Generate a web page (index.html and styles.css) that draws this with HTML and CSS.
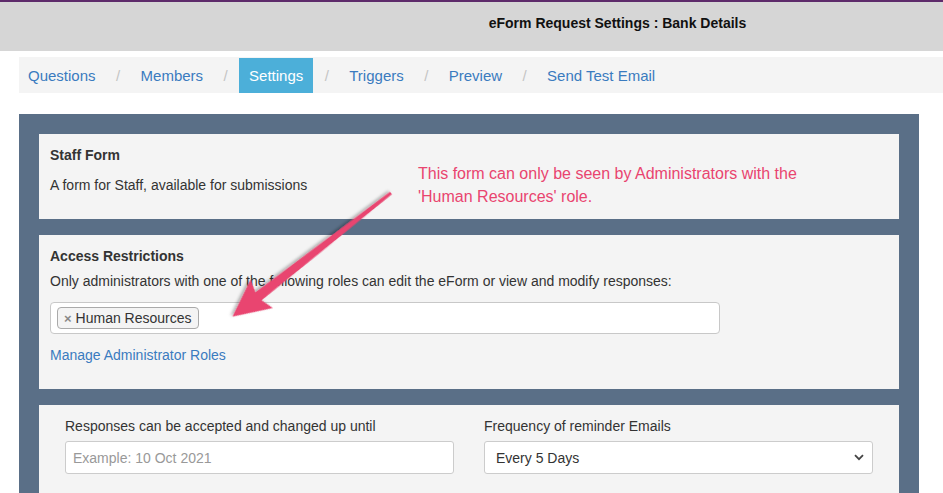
FILE: index.html
```html
<!DOCTYPE html>
<html lang="en">
<head>
    <meta charset="UTF-8">
    <title>eForm Request Settings</title>
    <link rel="stylesheet" href="styles.css">
</head>
<body>
    <header class="topbar">
        <h1>eForm Request Settings : Bank Details</h1>
    </header>

    <ul class="crumbs">
        <li><a href="#">Questions</a></li>
        <li class="sep">/</li>
        <li><a href="#">Members</a></li>
        <li class="sep">/</li>
        <li class="active">Settings</li>
        <li class="sep">/</li>
        <li><a href="#">Triggers</a></li>
        <li class="sep">/</li>
        <li><a href="#">Preview</a></li>
        <li class="sep">/</li>
        <li><a href="#">Send Test Email</a></li>
    </ul>

    <div class="panel">
        <div class="card card-info">
            <h4>Staff Form</h4>
            <p>A form for Staff, available for submissions</p>
        </div>

        <div class="card card-access">
            <h4>Access Restrictions</h4>
            <p class="hint">Only administrators with one of the following roles can edit the eForm or view and modify responses:</p>
            <div class="tagbox">
                <span class="tag"><span class="tag-x">&times;</span>Human Resources</span>
            </div>
            <a class="link" href="#">Manage Administrator Roles</a>
        </div>

        <div class="card card-dates">
            <div class="col">
                <label for="until">Responses can be accepted and changed up until</label>
                <input type="text" id="until" class="field field-text" placeholder="Example: 10 Oct 2021">
            </div>
            <div class="col">
                <label for="freq">Frequency of reminder Emails</label>
                <div class="select-wrap">
                    <select id="freq" class="field">
                        <option>Every 5 Days</option>
                        <option>Every Day</option>
                        <option>Every Week</option>
                    </select>
                    <svg class="chev" width="10" height="7" viewBox="0 0 10 7"><path d="M1 1.2 L5 5.2 L9 1.2" fill="none" stroke="#444" stroke-width="1.8"/></svg>
                </div>
            </div>
        </div>
    </div>

    <!-- screenshot annotation -->
    <div class="note">This form can only be seen by Administrators with the<br>'Human Resources' role.</div>
    <svg class="arrow" width="943" height="493" viewBox="0 0 943 493">
        <defs>
            <filter id="shadow" x="-20%" y="-20%" width="140%" height="140%">
                <feDropShadow dx="1" dy="2" stdDeviation="1.5" flood-color="#000" flood-opacity="0.3"/>
            </filter>
        </defs>
        <g transform="translate(391 193) rotate(142.05)" filter="url(#shadow)">
            <path d="M0 -1.6 L168 -5 L164 -18 L201 0 L164 18 L168 5 L0 1.6 Z" fill="#e9446f"/>
        </g>
    </svg>
</body>
</html>
```

FILE: styles.css
```css
body {
    margin: 0;
    font-family: "Liberation Sans", Arial, sans-serif;
    font-size: 14px;
    color: #333;
    background: #fff;
    position: relative;
    overflow: hidden;
}
.topbar {
    border-top: 2px solid #5e2b6b;
    background: #d6d6d6;
    height: 51px;
    box-sizing: border-box;
    padding: 13px 0 0 292px;
    text-align: center;
}
.topbar h1 {
    margin: 0;
    font-size: 14px;
    font-weight: bold;
    color: #111;
    line-height: 16px;
}
.crumbs {
    list-style: none;
    margin: 6px 0 21px 19px;
    padding: 1px 0 0 0;
    height: 36px;
    box-sizing: border-box;
    background: #f4f4f4;
    display: flex;
    font-size: 15px;
    line-height: 35px;
}
.crumbs li a,
.crumbs li.active {
    display: block;
    padding: 0 9px;
    text-decoration: none;
}
.crumbs li a {
    color: #3a7bbf;
}
.crumbs li.active {
    background: #4cafd9;
    color: #fff;
    padding: 0 10px;
}
.crumbs .sep {
    width: 27px;
    text-align: center;
    color: #c4c4c4;
}
.panel {
    margin-left: 19px;
    width: 900px;
    background: #5a6f87;
    padding: 20px 20px 0 20px;
    box-sizing: border-box;
}
.card {
    background: #f4f4f4;
    padding: 11px;
    margin-bottom: 16px;
}
.card h4 {
    margin: 0;
    font-size: 14px;
    line-height: 20px;
    font-weight: bold;
}
.card p {
    margin: 0;
    line-height: 20px;
}
.card-info {
    height: 85px;
    box-sizing: border-box;
}
.card-info h4 {
    margin-bottom: 10px;
}
.card-access {
    height: 154px;
    box-sizing: border-box;
}
.card-access h4 {
    margin-bottom: 5px;
}
.tagbox {
    margin-top: 11px;
    width: 670px;
    height: 32px;
    box-sizing: border-box;
    background: #fff;
    border: 1px solid #c8c8c8;
    border-radius: 4px;
    padding: 4px 6px;
}
.tag {
    display: inline-block;
    height: 22px;
    box-sizing: border-box;
    line-height: 20px;
    border: 1px solid #aaa;
    border-radius: 4px;
    background: #f4f4f4;
    padding: 0 6px 0 6px;
    color: #333;
}
.tag-x {
    color: #888;
    font-weight: bold;
    font-size: 13px;
    margin-right: 4px;
}
.link {
    display: block;
    margin-top: 11px;
    line-height: 20px;
    color: #3a7bbf;
    text-decoration: none;
}
.card-dates {
    display: flex;
    height: 88px;
    box-sizing: border-box;
    margin-bottom: 0;
}
.col {
    flex: 1;
    padding: 0 15px;
}
.col label {
    display: block;
    line-height: 20px;
    margin-bottom: 5px;
}
.field {
    display: block;
    width: 100%;
    height: 33px;
    box-sizing: border-box;
    border: 1px solid #ccc;
    border-radius: 3px;
    background: #fff;
    padding: 0 11px;
    font-family: "Liberation Sans", Arial, sans-serif;
    font-size: 14px;
    color: #333;
}
.field-text {
    padding: 0 7px;
}
.field::placeholder {
    color: #999;
}
select.field {
    appearance: none;
    -webkit-appearance: none;
}
.select-wrap {
    position: relative;
}
.chev {
    position: absolute;
    right: 9px;
    top: 13px;
    pointer-events: none;
}
.note {
    position: absolute;
    left: 418px;
    top: 162px;
    font-size: 16px;
    line-height: 23px;
    color: #e9446f;
}
.arrow {
    position: absolute;
    left: 0;
    top: 0;
    pointer-events: none;
}
```
